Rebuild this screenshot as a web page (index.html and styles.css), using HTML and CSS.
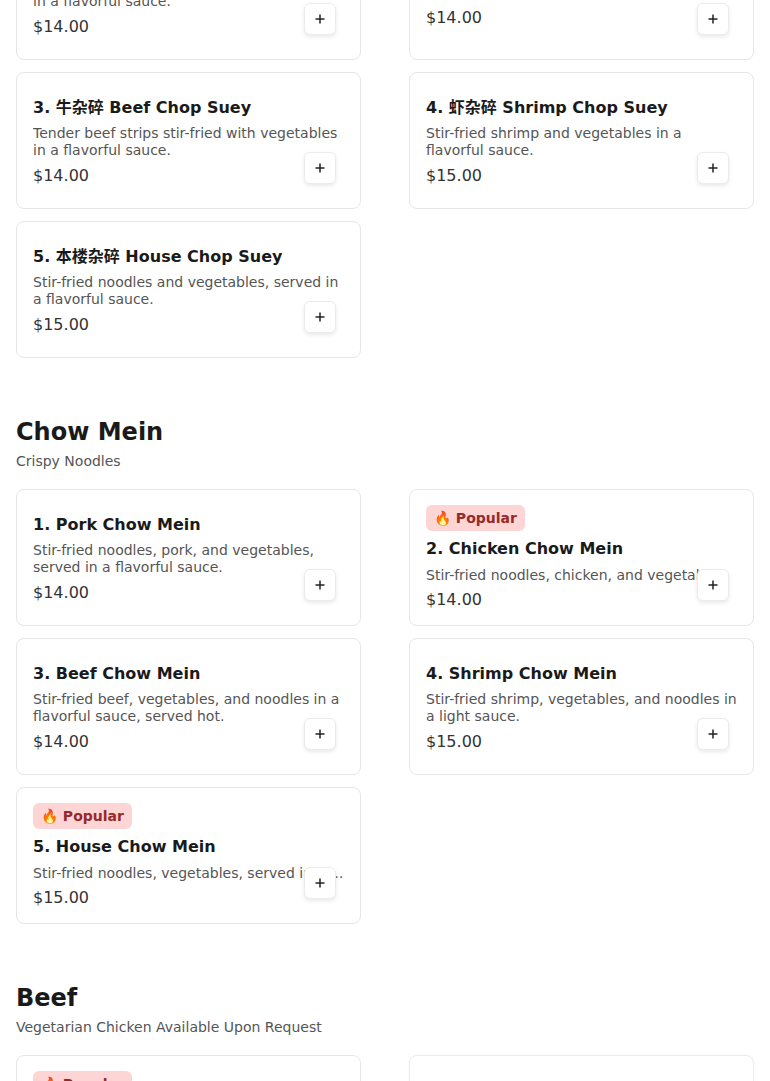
FILE: index.html
```html
<!DOCTYPE html>
<html lang="en">
<head>
<meta charset="utf-8">
<title>Menu</title>
<link rel="stylesheet" href="styles.css">
</head>
<body>
<main class="menu">

  <section class="section">
    <header class="section-head">
      <h2 class="section-title">Chop Suey</h2>
      <p class="section-sub">Served with White Rice</p>
    </header>
    <div class="grid">
      <article class="card">
        <h3 class="card-title">1. 猪杂碎 Pork Chop Suey</h3>
        <p class="card-desc">Tender pork strips stir-fried with vegetables in a flavorful sauce.</p>
        <p class="card-price">$14.00</p>
        <button class="add-btn" type="button" aria-label="Add"><svg viewBox="0 0 10 10" width="10" height="10"><path d="M5 0.5V9.5M0.5 5H9.5"/></svg></button>
      </article>
      <article class="card">
        <h3 class="card-title">2. 鸡杂碎 Chicken Chop Suey</h3>
        <p class="card-desc">Stir-fried chicken and fresh mushrooms.</p>
        <p class="card-price">$14.00</p>
        <button class="add-btn" type="button" aria-label="Add"><svg viewBox="0 0 10 10" width="10" height="10"><path d="M5 0.5V9.5M0.5 5H9.5"/></svg></button>
      </article>
      <article class="card">
        <h3 class="card-title">3. 牛杂碎 Beef Chop Suey</h3>
        <p class="card-desc">Tender beef strips stir-fried with vegetables in a flavorful sauce.</p>
        <p class="card-price">$14.00</p>
        <button class="add-btn" type="button" aria-label="Add"><svg viewBox="0 0 10 10" width="10" height="10"><path d="M5 0.5V9.5M0.5 5H9.5"/></svg></button>
      </article>
      <article class="card">
        <h3 class="card-title">4. 虾杂碎 Shrimp Chop Suey</h3>
        <p class="card-desc">Stir-fried shrimp and vegetables in a flavorful sauce.</p>
        <p class="card-price">$15.00</p>
        <button class="add-btn" type="button" aria-label="Add"><svg viewBox="0 0 10 10" width="10" height="10"><path d="M5 0.5V9.5M0.5 5H9.5"/></svg></button>
      </article>
      <article class="card">
        <h3 class="card-title">5. 本楼杂碎 House Chop Suey</h3>
        <p class="card-desc">Stir-fried noodles and vegetables, served in a flavorful sauce.</p>
        <p class="card-price">$15.00</p>
        <button class="add-btn" type="button" aria-label="Add"><svg viewBox="0 0 10 10" width="10" height="10"><path d="M5 0.5V9.5M0.5 5H9.5"/></svg></button>
      </article>
    </div>
  </section>

  <section class="section">
    <header class="section-head">
      <h2 class="section-title">Chow Mein</h2>
      <p class="section-sub">Crispy Noodles</p>
    </header>
    <div class="grid">
      <article class="card">
        <h3 class="card-title">1. Pork Chow Mein</h3>
        <p class="card-desc">Stir-fried noodles, pork, and vegetables, served in a flavorful sauce.</p>
        <p class="card-price">$14.00</p>
        <button class="add-btn" type="button" aria-label="Add"><svg viewBox="0 0 10 10" width="10" height="10"><path d="M5 0.5V9.5M0.5 5H9.5"/></svg></button>
      </article>
      <article class="card card--popular">
        <span class="badge">🔥 Popular</span>
        <h3 class="card-title">2. Chicken Chow Mein</h3>
        <p class="card-desc">Stir-fried noodles, chicken, and vegetables.</p>
        <p class="card-price">$14.00</p>
        <button class="add-btn" type="button" aria-label="Add"><svg viewBox="0 0 10 10" width="10" height="10"><path d="M5 0.5V9.5M0.5 5H9.5"/></svg></button>
      </article>
      <article class="card">
        <h3 class="card-title">3. Beef Chow Mein</h3>
        <p class="card-desc">Stir-fried beef, vegetables, and noodles in a flavorful sauce, served hot.</p>
        <p class="card-price">$14.00</p>
        <button class="add-btn" type="button" aria-label="Add"><svg viewBox="0 0 10 10" width="10" height="10"><path d="M5 0.5V9.5M0.5 5H9.5"/></svg></button>
      </article>
      <article class="card">
        <h3 class="card-title">4. Shrimp Chow Mein</h3>
        <p class="card-desc">Stir-fried shrimp, vegetables, and noodles in a light sauce.</p>
        <p class="card-price">$15.00</p>
        <button class="add-btn" type="button" aria-label="Add"><svg viewBox="0 0 10 10" width="10" height="10"><path d="M5 0.5V9.5M0.5 5H9.5"/></svg></button>
      </article>
      <article class="card card--popular">
        <span class="badge">🔥 Popular</span>
        <h3 class="card-title">5. House Chow Mein</h3>
        <p class="card-desc">Stir-fried noodles, vegetables, served in a light sauce.</p>
        <p class="card-price">$15.00</p>
        <button class="add-btn" type="button" aria-label="Add"><svg viewBox="0 0 10 10" width="10" height="10"><path d="M5 0.5V9.5M0.5 5H9.5"/></svg></button>
      </article>
    </div>
  </section>

  <section class="section">
    <header class="section-head">
      <h2 class="section-title">Beef</h2>
      <p class="section-sub">Vegetarian Chicken Available Upon Request</p>
    </header>
    <div class="grid">
      <article class="card card--popular">
        <span class="badge">🔥 Popular</span>
        <h3 class="card-title">1. Beef with Broccoli</h3>
        <p class="card-desc">Sliced beef and fresh broccoli in a savory brown sauce.</p>
        <p class="card-price">$15.00</p>
        <button class="add-btn" type="button" aria-label="Add"><svg viewBox="0 0 10 10" width="10" height="10"><path d="M5 0.5V9.5M0.5 5H9.5"/></svg></button>
      </article>
      <article class="card card--entering">
        <h3 class="card-title">2. Mongolian Beef</h3>
        <p class="card-desc">Tender beef with scallions and onions in a sweet soy glaze.</p>
        <p class="card-price">$15.00</p>
        <button class="add-btn" type="button" aria-label="Add"><svg viewBox="0 0 10 10" width="10" height="10"><path d="M5 0.5V9.5M0.5 5H9.5"/></svg></button>
      </article>
    </div>
  </section>

</main>
</body>
</html>
```

FILE: styles.css
```css
* {
  box-sizing: border-box;
}

html, body {
  margin: 0;
  padding: 0;
  background: #ffffff;
}

body {
  font-family: "DejaVu Sans", "Noto Sans CJK SC", sans-serif;
  color: #1a1a1a;
  overflow: hidden;
}

/* page is shown scrolled part-way down the menu */
.menu {
  margin-top: -148px;
  padding: 0 16px;
}

.section + .section {
  margin-top: 60px;
}

.section-head {
  margin-bottom: 19px;
}

.section-title {
  margin: 0 0 6px;
  font-size: 24px;
  line-height: 29px;
  font-weight: 700;
  color: #1a1a1a;
}

.section-sub {
  margin: 0;
  font-size: 14px;
  line-height: 17px;
  color: #555555;
}

.grid {
  display: grid;
  grid-template-columns: repeat(2, minmax(0, 1fr));
  column-gap: 48px;
  row-gap: 12px;
}

.card {
  position: relative;
  min-width: 0;
  display: flex;
  flex-direction: column;
  justify-content: center;
  align-items: flex-start;
  min-height: 137px;
  padding: 13px 16px 11px;
  background: #ffffff;
  border: 1px solid #e6e6e6;
  border-radius: 8px;
}

.card--entering {
  border-color: #ececec;
  box-shadow: 0 0 3px rgba(0, 0, 0, 0.04);
}

.card--entering > * {
  opacity: 0.1;
}

.badge {
  display: inline-flex;
  align-items: center;
  height: 26px;
  margin-bottom: 6px;
  padding: 0 8px;
  border-radius: 6px;
  background: #fdd5d5;
  color: #962a2a;
  font-size: 14px;
  font-weight: 700;
  line-height: 1;
}

.card-title {
  margin: 0;
  font-size: 16px;
  line-height: 24px;
  font-weight: 700;
  color: #1a1a1a;
}

.card-desc {
  margin: 5.5px 0 0;
  width: 100%;
  font-size: 14px;
  line-height: 17px;
  color: #555555;
  display: -webkit-box;
  -webkit-box-orient: vertical;
  -webkit-line-clamp: 2;
  overflow: hidden;
}

.card--popular .card-desc {
  display: block;
  white-space: nowrap;
  text-overflow: ellipsis;
}

.card-price {
  margin: 4.5px 0 0;
  font-size: 16px;
  line-height: 24px;
  color: #333333;
}

.add-btn {
  position: absolute;
  right: 24px;
  bottom: 24px;
  width: 32px;
  height: 32px;
  padding: 0;
  display: grid;
  place-items: center;
  background: #ffffff;
  border: 1px solid #ebebeb;
  border-radius: 6px;
  box-shadow: 0 2px 4px rgba(0, 0, 0, 0.09);
  cursor: pointer;
}

.add-btn svg {
  display: block;
  fill: none;
  stroke: #222222;
  stroke-width: 1.5;
}
```
